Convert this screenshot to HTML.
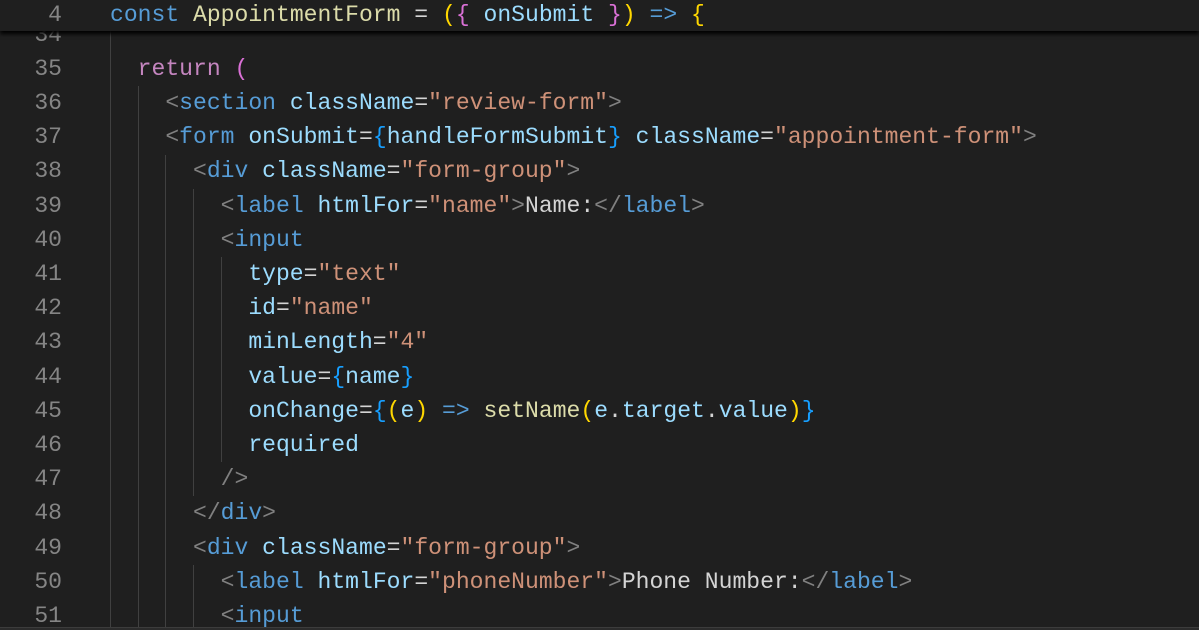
<!DOCTYPE html>
<html><head><meta charset="utf-8"><style>
html,body{margin:0;padding:0;background:#1f1f1f;width:1199px;height:630px;overflow:hidden;position:relative}
.l{position:absolute;left:0;width:1199px;height:34.2px;line-height:34.2px;font-family:"Liberation Mono",monospace;font-size:23.05px;white-space:pre;color:#d4d4d4;overflow:hidden}
.n{position:absolute;left:0;width:62px;text-align:right;color:#858585}
.c{position:absolute;left:110px}
.g{position:absolute;width:1px;background:#404040}
.k{color:#569cd6}.p{color:#c586c0}.f{color:#dcdcaa}.v{color:#9cdcfe}.s{color:#ce9178}.b{color:#808080}
.y{color:#ffd700}.m{color:#da70d6}.u{color:#179fff}
#hdr{position:absolute;left:0;top:0;width:1199px;height:31px;background:#1f1f1f;box-shadow:0 3px 4px #000;z-index:2;overflow:hidden}
</style></head><body>
<div class="g" style="left:110px;top:31px;height:600px"></div>
<div class="g" style="left:138px;top:86px;height:544px"></div>
<div class="g" style="left:165px;top:155px;height:475px"></div>
<div class="g" style="left:193px;top:189px;height:307px"></div>
<div class="g" style="left:193px;top:565px;height:65px"></div>
<div class="g" style="left:221px;top:257px;height:205px"></div>

<div class="l" style="top:18px"><span class="n">34</span></div>
<div class="l" style="top:52px"><span class="n">35</span><span class="c">  <span class="p">return</span> <span class="m">(</span></span></div>
<div class="l" style="top:86px"><span class="n">36</span><span class="c">    <span class="b">&lt;</span><span class="k">section</span> <span class="v">className</span>=<span class="s">"review-form"</span><span class="b">&gt;</span></span></div>
<div class="l" style="top:120px"><span class="n">37</span><span class="c">    <span class="b">&lt;</span><span class="k">form</span> <span class="v">onSubmit</span>=<span class="u">{</span><span class="v">handleFormSubmit</span><span class="u">}</span> <span class="v">className</span>=<span class="s">"appointment-form"</span><span class="b">&gt;</span></span></div>
<div class="l" style="top:154px"><span class="n">38</span><span class="c">      <span class="b">&lt;</span><span class="k">div</span> <span class="v">className</span>=<span class="s">"form-group"</span><span class="b">&gt;</span></span></div>
<div class="l" style="top:189px"><span class="n">39</span><span class="c">        <span class="b">&lt;</span><span class="k">label</span> <span class="v">htmlFor</span>=<span class="s">"name"</span><span class="b">&gt;</span>Name:<span class="b">&lt;/</span><span class="k">label</span><span class="b">&gt;</span></span></div>
<div class="l" style="top:223px"><span class="n">40</span><span class="c">        <span class="b">&lt;</span><span class="k">input</span></span></div>
<div class="l" style="top:257px"><span class="n">41</span><span class="c">          <span class="v">type</span>=<span class="s">"text"</span></span></div>
<div class="l" style="top:291px"><span class="n">42</span><span class="c">          <span class="v">id</span>=<span class="s">"name"</span></span></div>
<div class="l" style="top:325px"><span class="n">43</span><span class="c">          <span class="v">minLength</span>=<span class="s">"4"</span></span></div>
<div class="l" style="top:360px"><span class="n">44</span><span class="c">          <span class="v">value</span>=<span class="u">{</span><span class="v">name</span><span class="u">}</span></span></div>
<div class="l" style="top:394px"><span class="n">45</span><span class="c">          <span class="v">onChange</span>=<span class="u">{</span><span class="y">(</span><span class="v">e</span><span class="y">)</span> <span class="k">=&gt;</span> <span class="f">setName</span><span class="y">(</span><span class="v">e</span>.<span class="v">target</span>.<span class="v">value</span><span class="y">)</span><span class="u">}</span></span></div>
<div class="l" style="top:428px"><span class="n">46</span><span class="c">          <span class="v">required</span></span></div>
<div class="l" style="top:462px"><span class="n">47</span><span class="c">        <span class="b">/&gt;</span></span></div>
<div class="l" style="top:496px"><span class="n">48</span><span class="c">      <span class="b">&lt;/</span><span class="k">div</span><span class="b">&gt;</span></span></div>
<div class="l" style="top:531px"><span class="n">49</span><span class="c">      <span class="b">&lt;</span><span class="k">div</span> <span class="v">className</span>=<span class="s">"form-group"</span><span class="b">&gt;</span></span></div>
<div class="l" style="top:565px"><span class="n">50</span><span class="c">        <span class="b">&lt;</span><span class="k">label</span> <span class="v">htmlFor</span>=<span class="s">"phoneNumber"</span><span class="b">&gt;</span>Phone Number:<span class="b">&lt;/</span><span class="k">label</span><span class="b">&gt;</span></span></div>
<div class="l" style="top:599px;height:28px"><span class="n">51</span><span class="c">        <span class="b">&lt;</span><span class="k">input</span></span></div>
<div style="position:absolute;left:0;top:627px;width:1199px;height:3px;background:#2b2b2b;border-top:1px solid #3c3c3c;box-sizing:border-box"></div>

<div id="hdr"><div class="l" style="top:-2px"><span class="n">4</span><span class="c"><span class="k">const</span> <span class="f">AppointmentForm</span> = <span class="y">(</span><span class="m">{</span> <span class="v">onSubmit</span> <span class="m">}</span><span class="y">)</span> <span class="k">=&gt;</span> <span class="y">{</span></span></div></div>
</body></html>
